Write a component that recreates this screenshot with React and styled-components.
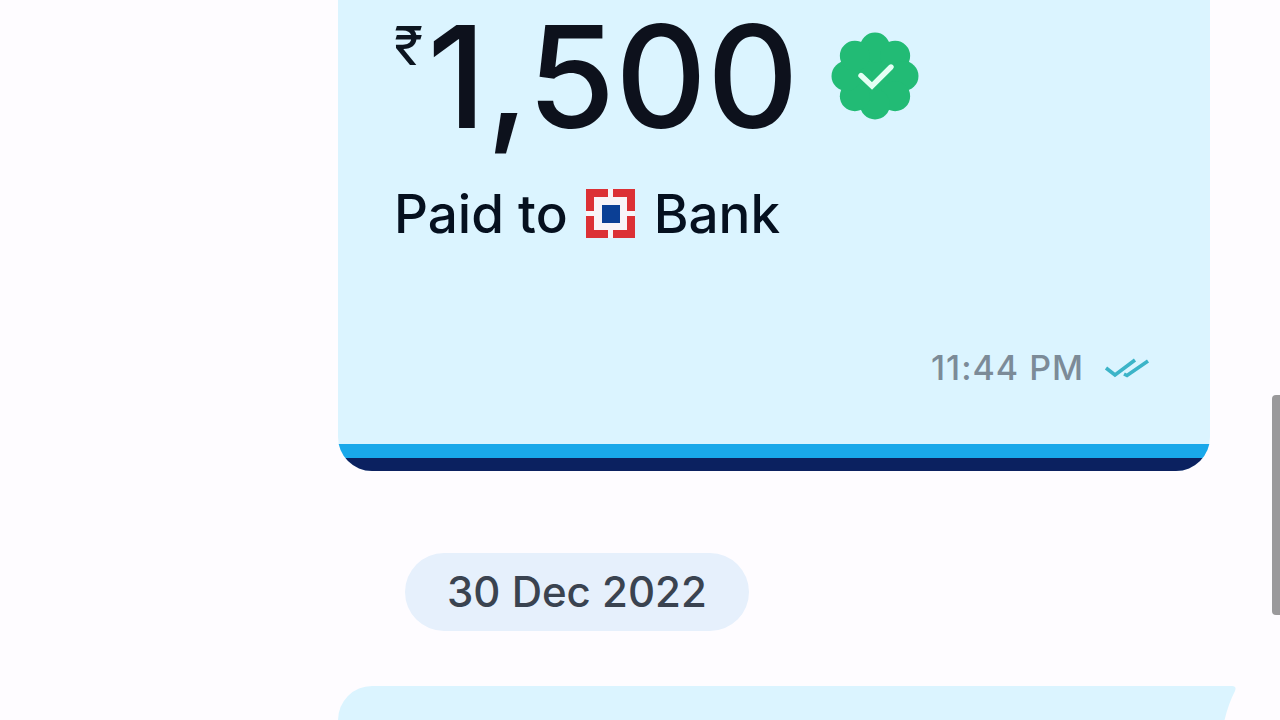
import React from 'react';
import styled, { createGlobalStyle } from 'styled-components';

const GlobalStyle = createGlobalStyle`
  * {
    box-sizing: border-box;
  }
  body {
    margin: 0;
    background: #fefcff;
    font-family: Inter, 'Liberation Sans', sans-serif;
  }
`;

const Feed = styled.main`
  position: relative;
  display: flex;
  flex-direction: column;
  height: 100vh;
  overflow: hidden;
  padding: 0 44px 0 338px;
`;
const Message = styled.article`
  flex: none;
  display: flex;
  margin-right: ${({ $tail }) => ($tail ? 0 : 26)}px;
`;
const Card = styled.div`
  flex: 1;
  overflow: hidden;
  background: #dbf4ff;
  border-radius: ${({ $next }) => ($next ? '34px 0 0 0' : '0 0 34px 34px')};
`;
const CardBody = styled.div`
  display: flex;
  flex-direction: column;
  padding: 0 56px;
  height: ${({ $next }) => ($next ? 200 : 444)}px;
`;
const AmountRow = styled.div`
  display: flex;
  align-items: center;
  gap: 4px;
  height: 152px;
`;
const Currency = styled.span`
  align-self: flex-start;
  margin-top: 16px;
  font-family: 'Liberation Sans', Inter, sans-serif;
  font-size: 54px;
  line-height: 60px;
  color: #0c1520;
`;
const Amount = styled.span`
  font-size: 142px;
  line-height: 152px;
  font-weight: 500;
  color: #0d111c;
`;
const VerifiedIcon = styled.svg`
  flex: none;
  width: 88px;
  height: 88px;
  margin-left: 28px;
`;
const Payee = styled.div`
  display: flex;
  align-items: center;
  gap: 18px;
  height: 64px;
  margin-top: 30px;
  font-size: 53px;
  line-height: 64px;
  font-weight: 500;
  color: #05101f;
`;
const BankLogo = styled.svg`
  flex: none;
  width: 50px;
  height: 50px;
`;
const Meta = styled.div`
  display: flex;
  align-items: center;
  justify-content: flex-end;
  gap: 20px;
  margin-top: 100px;
  padding-right: 4px;
`;
const Time = styled.time`
  font-size: 34px;
  line-height: 44px;
  font-weight: 500;
  letter-spacing: 1px;
  color: #7c8b98;
`;
const ReadIcon = styled.svg`
  width: 46px;
  height: 22px;
`;
const Stripe = styled.div`
  height: ${({ $height }) => $height}px;
  background: ${({ $color }) => $color};
`;
const DateChip = styled.time`
  flex: none;
  align-self: flex-start;
  margin: 82px 0 55px 67px;
  padding: 14px 42px;
  border-radius: 39px;
  background: #e6f0fc;
  color: #3a4350;
  font-size: 42px;
  line-height: 50px;
  font-weight: 500;
`;
const Tail = styled.svg`
  flex: none;
  width: 26px;
  height: 60px;
`;
const ScrollThumb = styled.div`
  position: absolute;
  top: 395px;
  right: 0;
  width: 8px;
  height: 220px;
  border-radius: 4px 0 0 4px;
  background: #9a999b;
`;

const LOBES = [0, 45, 90, 135, 180, 225, 270, 315];

function Verified() {
  return (
    <VerifiedIcon viewBox="0 0 88 88" role="img" aria-label="Verified">
      <g fill="#22bb75">
        <circle cx="44" cy="44" r="35" />
        {LOBES.map(angle => (
          <circle key={angle} cx="44" cy="15.5" r="15" transform={`rotate(${angle} 44 44)`} />
        ))}
      </g>
      <path d="M30 43.5 41 54 60 35" fill="none" stroke="#e4fff4" strokeWidth="5.4" strokeLinecap="round" />
    </VerifiedIcon>
  );
}

function Logo() {
  return (
    <BankLogo viewBox="0 0 50 50" role="img" aria-label="HDFC">
      <path fill="#f8f4f8" d="M0 0h49v49H0z" />
      <path
        fill="#dc3035"
        d="M0 0h22v8H8v14H0zM27 0h22v22h-8V8H27zM0 27h8v14h14v8H0zM41 27h8v22H27v-8h14z"
      />
      <path fill="#0b3f95" d="M16 16h18v18H16z" />
    </BankLogo>
  );
}

export default function App() {
  return (
    <>
      <GlobalStyle />
      <Feed>
        <Message>
          <Card>
            <CardBody>
              <AmountRow>
                <Currency>₹</Currency>
                <Amount>1,500</Amount>
                <Verified />
              </AmountRow>
              <Payee>
                <span>Paid to</span>
                <Logo />
                <span>Bank</span>
              </Payee>
              <Meta>
                <Time>11:44 PM</Time>
                <ReadIcon viewBox="0 0 46 22" role="img" aria-label="Read">
                  <path
                    d="M2 11 11 18 31 3M20 17 23 18.500 44 4"
                    fill="none"
                    stroke="#3cb4c8"
                    strokeWidth="3.600"
                  />
                </ReadIcon>
              </Meta>
            </CardBody>
            <Stripe $height={14} $color="#19a8ea" />
            <Stripe $height={13} $color="#0b2160" />
          </Card>
        </Message>
        <DateChip dateTime="2022-12-30">30 Dec 2022</DateChip>
        <Message $tail>
          <Card $next>
            <CardBody $next />
          </Card>
          <Tail viewBox="0 0 26 60">
            <path fill="#dbf4ff" d="M0 0H22Q27 0 25 5Q14 26 10 60H0z" />
          </Tail>
        </Message>
        <ScrollThumb />
      </Feed>
    </>
  );
}
